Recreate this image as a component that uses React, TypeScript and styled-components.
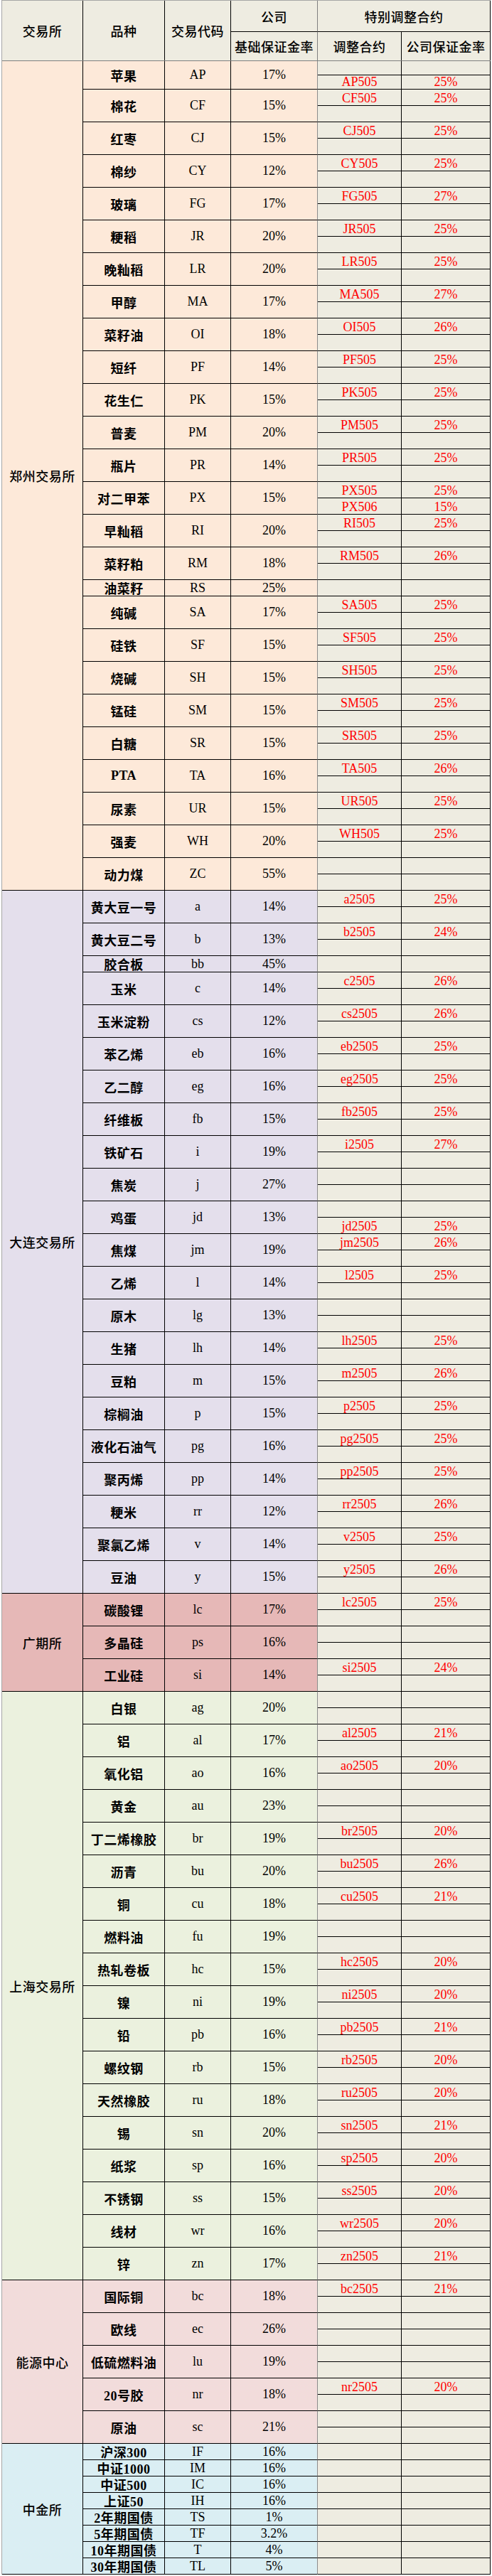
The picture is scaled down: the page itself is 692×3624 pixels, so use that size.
import React from 'react';
import styled, { createGlobalStyle } from 'styled-components';

type Adj = [string, string] | null;

type Item = {
  name: string;
  code: string;
  rate: string;
  subs: number;
  subH: number;
  adj: Adj[];
};

type Group = {
  name: string;
  bg: string;
  items: Item[];
};

const W = { ex: 114, name: 115, code: 93, rate: 122, adj: 118, adjRate: 125 };
const SUB = 23;

// two sub-rows, adjustment contract sits in `slot`
function two(name: string, code: string, rate: string, a?: [string, string], slot = 0): Item {
  const adj: Adj[] = [null, null];
  if (a) adj[slot] = a;
  return { name, code, rate, subs: 2, subH: SUB, adj };
}

function one(name: string, code: string, rate: string): Item {
  return { name, code, rate, subs: 1, subH: SUB, adj: [null] };
}

const groups: Group[] = [
  {
    name: '郑州交易所',
    bg: '#FDE9D9',
    items: [
      { ...two('苹果', 'AP', '17%', ['AP505', '25%'], 1), subH: 20 },
      two('棉花', 'CF', '15%', ['CF505', '25%']),
      two('红枣', 'CJ', '15%', ['CJ505', '25%']),
      two('棉纱', 'CY', '12%', ['CY505', '25%']),
      two('玻璃', 'FG', '17%', ['FG505', '27%']),
      two('粳稻', 'JR', '20%', ['JR505', '25%']),
      two('晚籼稻', 'LR', '20%', ['LR505', '25%']),
      two('甲醇', 'MA', '17%', ['MA505', '27%']),
      two('菜籽油', 'OI', '18%', ['OI505', '26%']),
      two('短纤', 'PF', '14%', ['PF505', '25%']),
      two('花生仁', 'PK', '15%', ['PK505', '25%']),
      two('普麦', 'PM', '20%', ['PM505', '25%']),
      two('瓶片', 'PR', '14%', ['PR505', '25%']),
      { ...two('对二甲苯', 'PX', '15%'), adj: [['PX505', '25%'], ['PX506', '15%']] },
      two('早籼稻', 'RI', '20%', ['RI505', '25%']),
      two('菜籽粕', 'RM', '18%', ['RM505', '26%']),
      one('油菜籽', 'RS', '25%'),
      two('纯碱', 'SA', '17%', ['SA505', '25%']),
      two('硅铁', 'SF', '15%', ['SF505', '25%']),
      two('烧碱', 'SH', '15%', ['SH505', '25%']),
      two('锰硅', 'SM', '15%', ['SM505', '25%']),
      two('白糖', 'SR', '15%', ['SR505', '25%']),
      two('PTA', 'TA', '16%', ['TA505', '26%']),
      two('尿素', 'UR', '15%', ['UR505', '25%']),
      two('强麦', 'WH', '20%', ['WH505', '25%']),
      two('动力煤', 'ZC', '55%'),
    ],
  },
  {
    name: '大连交易所',
    bg: '#E4DFEC',
    items: [
      two('黄大豆一号', 'a', '14%', ['a2505', '25%']),
      two('黄大豆二号', 'b', '13%', ['b2505', '24%']),
      one('胶合板', 'bb', '45%'),
      two('玉米', 'c', '14%', ['c2505', '26%']),
      two('玉米淀粉', 'cs', '12%', ['cs2505', '26%']),
      two('苯乙烯', 'eb', '16%', ['eb2505', '25%']),
      two('乙二醇', 'eg', '16%', ['eg2505', '25%']),
      two('纤维板', 'fb', '15%', ['fb2505', '25%']),
      two('铁矿石', 'i', '19%', ['i2505', '27%']),
      two('焦炭', 'j', '27%'),
      two('鸡蛋', 'jd', '13%', ['jd2505', '25%'], 1),
      two('焦煤', 'jm', '19%', ['jm2505', '26%']),
      two('乙烯', 'l', '14%', ['l2505', '25%']),
      two('原木', 'lg', '13%'),
      two('生猪', 'lh', '14%', ['lh2505', '25%']),
      two('豆粕', 'm', '15%', ['m2505', '26%']),
      two('棕榈油', 'p', '15%', ['p2505', '25%']),
      two('液化石油气', 'pg', '16%', ['pg2505', '25%']),
      two('聚丙烯', 'pp', '14%', ['pp2505', '25%']),
      two('粳米', 'rr', '12%', ['rr2505', '26%']),
      two('聚氯乙烯', 'v', '14%', ['v2505', '25%']),
      two('豆油', 'y', '15%', ['y2505', '26%']),
    ],
  },
  {
    name: '广期所',
    bg: '#E6B8B7',
    items: [
      two('碳酸锂', 'lc', '17%', ['lc2505', '25%']),
      two('多晶硅', 'ps', '16%'),
      two('工业硅', 'si', '14%', ['si2505', '24%']),
    ],
  },
  {
    name: '上海交易所',
    bg: '#EBF1DE',
    items: [
      two('白银', 'ag', '20%'),
      two('铝', 'al', '17%', ['al2505', '21%']),
      two('氧化铝', 'ao', '16%', ['ao2505', '20%']),
      two('黄金', 'au', '23%'),
      two('丁二烯橡胶', 'br', '19%', ['br2505', '20%']),
      two('沥青', 'bu', '20%', ['bu2505', '26%']),
      two('铜', 'cu', '18%', ['cu2505', '21%']),
      two('燃料油', 'fu', '19%'),
      two('热轧卷板', 'hc', '15%', ['hc2505', '20%']),
      two('镍', 'ni', '19%', ['ni2505', '20%']),
      two('铅', 'pb', '16%', ['pb2505', '21%']),
      two('螺纹钢', 'rb', '15%', ['rb2505', '20%']),
      two('天然橡胶', 'ru', '18%', ['ru2505', '20%']),
      two('锡', 'sn', '20%', ['sn2505', '21%']),
      two('纸浆', 'sp', '16%', ['sp2505', '20%']),
      two('不锈钢', 'ss', '15%', ['ss2505', '20%']),
      two('线材', 'wr', '16%', ['wr2505', '20%']),
      two('锌', 'zn', '17%', ['zn2505', '21%']),
    ],
  },
  {
    name: '能源中心',
    bg: '#F2DCDB',
    items: [
      two('国际铜', 'bc', '18%', ['bc2505', '21%']),
      two('欧线', 'ec', '26%'),
      two('低硫燃料油', 'lu', '19%'),
      two('20号胶', 'nr', '18%', ['nr2505', '20%']),
      two('原油', 'sc', '21%'),
    ],
  },
  {
    name: '中金所',
    bg: '#DAEEF3',
    items: [
      one('沪深300', 'IF', '16%'),
      one('中证1000', 'IM', '16%'),
      one('中证500', 'IC', '16%'),
      one('上证50', 'IH', '16%'),
      one('2年期国债', 'TS', '1%'),
      one('5年期国债', 'TF', '3.2%'),
      one('10年期国债', 'T', '4%'),
      one('30年期国债', 'TL', '5%'),
    ],
  },
];

export default function App() {
  return (
    <>
      <GlobalStyle />
      <Sheet>
        <HeaderRow>
          <HeadCell $w={W.ex}>交易所</HeadCell>
          <HeadCell $w={W.name}>品种</HeadCell>
          <HeadCell $w={W.code}>交易代码</HeadCell>
          <HeadStack>
            <HeadCell $w={W.rate} $h={44} $bottom $edge="#7f7f7f">
              公司
            </HeadCell>
            <HeadCell $w={W.rate} $h={40} $edge="#7f7f7f">
              基础保证金率
            </HeadCell>
          </HeadStack>
          <HeadStack>
            <HeadCell $w={W.adj + W.adjRate} $h={44} $bottom>
              特别调整合约
            </HeadCell>
            <HeadPair>
              <HeadCell $w={W.adj} $h={40}>
                调整合约
              </HeadCell>
              <HeadCell $w={W.adjRate} $h={40}>
                公司保证金率
              </HeadCell>
            </HeadPair>
          </HeadStack>
        </HeaderRow>

        {groups.map((g) => (
          <GroupRow key={g.name} $bg={g.bg}>
            <ExchangeCell>{g.name}</ExchangeCell>
            <ProductList>
              {g.items.map((it) => (
                <ProductRow key={it.code}>
                  <NameCell $h={it.subs * it.subH}>{it.name}</NameCell>
                  <CodeCell $h={it.subs * it.subH}>{it.code}</CodeCell>
                  <RateCell $h={it.subs * it.subH}>{it.rate}</RateCell>
                  <AdjustStack>
                    {it.adj.map((a, i) => (
                      <AdjustRow key={i} $h={it.subH}>
                        <AdjustCell $w={W.adj}>{a ? a[0] : ''}</AdjustCell>
                        <AdjustCell $w={W.adjRate}>{a ? a[1] : ''}</AdjustCell>
                      </AdjustRow>
                    ))}
                  </AdjustStack>
                </ProductRow>
              ))}
            </ProductList>
          </GroupRow>
        ))}
      </Sheet>
    </>
  );
}

const GlobalStyle = createGlobalStyle`
  html, body {
    margin: 0;
    padding: 0;
    background: #ffffff;
  }

  body {
    font-family: "Liberation Serif", "Noto Sans CJK SC", serif;
    color: #000000;
  }

  * {
    box-sizing: border-box;
  }
`;

const Sheet = styled.div`
  display: flex;
  flex-direction: column;
  width: 688px;
  margin-left: 2px;
  border-left: 1px solid #a6a6a6;
  border-top: 1px solid #a6a6a6;
`;

const HeaderRow = styled.div`
  display: flex;
  height: 85px;
  background: #eeece1;
  border-bottom: 1px solid #7f7f7f;
`;

const HeadStack = styled.div`
  display: flex;
  flex-direction: column;
`;

const HeadPair = styled.div`
  display: flex;
`;

const HeadCell = styled.div<{ $w: number; $h?: number; $bottom?: boolean; $edge?: string }>`
  flex: none;
  width: ${(p) => p.$w}px;
  height: ${(p) => (p.$h ? `${p.$h}px` : '100%')};
  display: flex;
  align-items: center;
  justify-content: center;
  border-right: 1px solid ${(p) => p.$edge || '#000000'};
  border-bottom: ${(p) => (p.$bottom ? '1px solid #000000' : 'none')};
  font-size: 18px;
  font-weight: 500;
  letter-spacing: 0.5px;
  white-space: nowrap;
`;

const GroupRow = styled.div<{ $bg: string }>`
  display: flex;
  background: ${(p) => p.$bg};
`;

const ExchangeCell = styled.div`
  flex: none;
  width: ${W.ex}px;
  display: flex;
  align-items: center;
  justify-content: center;
  border-right: 1px solid #000000;
  border-bottom: 1px solid #000000;
  font-size: 18px;
  font-weight: 500;
  letter-spacing: 0.5px;
`;

const ProductList = styled.div`
  display: flex;
  flex-direction: column;
`;

const ProductRow = styled.div`
  display: flex;
`;

const BaseCell = styled.div<{ $h: number }>`
  flex: none;
  height: ${(p) => p.$h}px;
  display: flex;
  align-items: center;
  justify-content: center;
  border-right: 1px solid #000000;
  border-bottom: 1px solid #000000;
  white-space: nowrap;
`;

const NameCell = styled(BaseCell)`
  width: ${W.name}px;
  font-size: 18px;
  font-weight: 700;
  letter-spacing: 0.5px;
`;

const CodeCell = styled(BaseCell)`
  width: ${W.code}px;
  font-size: 18px;
`;

const RateCell = styled(BaseCell)`
  width: ${W.rate}px;
  font-size: 18px;
  border-right-color: #8c8c8c;
`;

const AdjustStack = styled.div`
  display: flex;
  flex-direction: column;
  background: #eeece1;
`;

const AdjustRow = styled.div<{ $h: number }>`
  display: flex;
  height: ${(p) => p.$h}px;
  border-bottom: 1px solid #000000;
`;

const AdjustCell = styled.div<{ $w: number }>`
  flex: none;
  width: ${(p) => p.$w}px;
  display: flex;
  align-items: flex-end;
  justify-content: center;
  border-right: 1px solid #000000;
  color: #ff0000;
  font-size: 18px;
  line-height: 19px;
  white-space: nowrap;
`;
